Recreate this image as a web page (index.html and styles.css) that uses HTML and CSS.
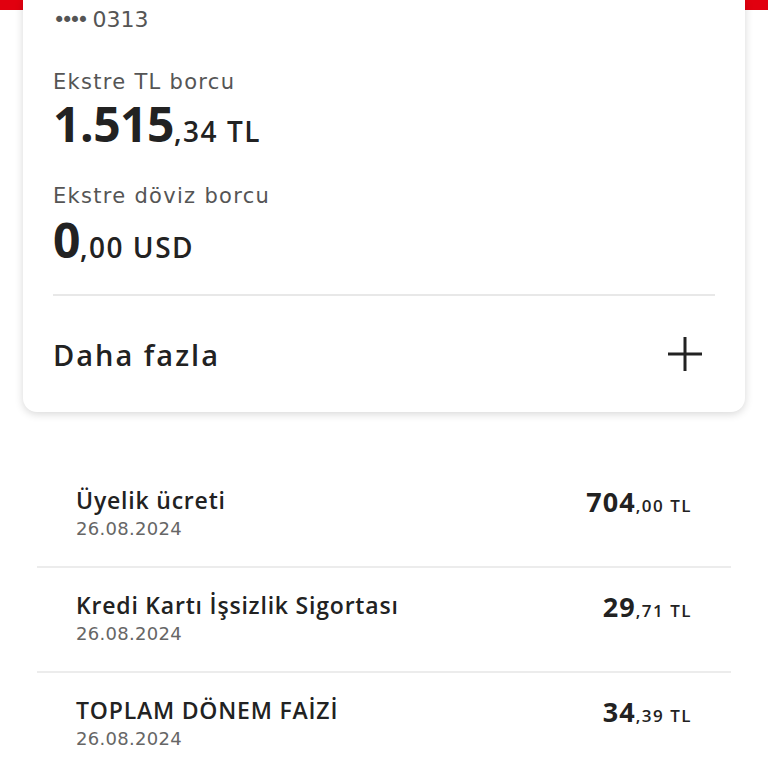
FILE: index.html
```html
<!DOCTYPE html>
<html lang="tr">
<head>
<meta charset="utf-8">
<link rel="stylesheet" href="styles.css">
</head>
<body>
<div class="card">
  <div class="cardno"><span class="dots">••••</span> 0313</div>
  <div class="label first">Ekstre TL borcu</div>
  <div class="big first"><span class="int">1.515</span><span class="dec">,34 TL</span></div>
  <div class="label">Ekstre döviz borcu</div>
  <div class="big"><span class="int">0</span><span class="dec">,00 USD</span></div>
  <div class="divider"></div>
  <div class="more">
    <span class="more-text">Daha fazla</span>
    <svg class="plus" width="36" height="36" viewBox="0 0 36 36"><path d="M18 1V35M1 18H35" stroke="#222" stroke-width="3" fill="none"/></svg>
  </div>
</div>
<div class="list">
  <div class="row">
    <div class="left"><div class="title">Üyelik ücreti</div><div class="date">26.08.2024</div></div>
    <div class="amount"><span class="aint">704</span><span class="adec">,00 TL</span></div>
  </div>
  <div class="row">
    <div class="left"><div class="title">Kredi Kartı İşsizlik Sigortası</div><div class="date">26.08.2024</div></div>
    <div class="amount"><span class="aint">29</span><span class="adec">,71 TL</span></div>
  </div>
  <div class="row last">
    <div class="left"><div class="title">TOPLAM DÖNEM FAİZİ</div><div class="date">26.08.2024</div></div>
    <div class="amount"><span class="aint">34</span><span class="adec">,39 TL</span></div>
  </div>
</div>
</body>
</html>
```
FILE: styles.css
```css
html, body { margin: 0; padding: 0; }
body {
  width: 768px;
  height: 768px;
  overflow: hidden;
  background: linear-gradient(#e1000f 0, #e1000f 10px, #ffffff 10px);
  font-family: "Open Sans", "Noto Sans", sans-serif;
  color: #222;
}
.card {
  margin: 0 23px;
  background: #fff;
  border-radius: 0 0 14px 14px;
  box-shadow: 0 2px 8px rgba(0,0,0,0.16);
  padding: 0 30px;
  height: 412px;
  box-sizing: border-box;
}
.cardno {
  font-family: "DejaVu Sans", sans-serif;
  font-size: 22px;
  line-height: 40px;
  color: #555;
}
.dots { font-size: 21px; line-height: 1; letter-spacing: -4.5px; margin-right: 1px; }
.label {
  font-family: "DejaVu Sans", sans-serif;
  font-size: 21px;
  line-height: 26px;
  color: #555;
  margin-top: 31px;
  letter-spacing: 1.3px;
}
.label.first { margin-top: 29px; }
.big {
  font-size: 48px;
  line-height: 56px;
  height: 56px;
  margin-top: 3px;
}
.big.first { margin-top: 1px; }
.int { font-weight: 700; letter-spacing: -0.5px; }
.dec { font-size: 28px; line-height: 1; font-weight: 600; letter-spacing: 1.5px; }
.divider {
  height: 2px;
  background: #e8e8e8;
  margin-top: 26px;
}
.more {
  display: flex;
  align-items: center;
  justify-content: space-between;
  height: 116px;
}
.more-text { font-size: 29px; font-weight: 600; color: #222; letter-spacing: 2px; }
.plus { margin-right: 12px; }
.list {
  margin: 51px 37px 0;
}
.row {
  display: flex;
  justify-content: space-between;
  align-items: flex-start;
  height: 103px;
  border-bottom: 2px solid #ececec;
  padding: 0 39px;
  box-sizing: content-box;
}
.row.last { border-bottom: none; }
.left { padding-top: 22px; }
.title { font-size: 23px; line-height: 30px; font-weight: 600; color: #222; letter-spacing: 0.8px; }
.date { font-family: "DejaVu Sans", sans-serif; font-size: 18px; line-height: 28px; color: #666; letter-spacing: 0.3px; }
.amount { padding-top: 24px; line-height: 30px; }
.aint { font-size: 27px; font-weight: 700; letter-spacing: 1px; }
.adec { font-size: 17px; font-weight: 600; letter-spacing: 1.5px; }
```
